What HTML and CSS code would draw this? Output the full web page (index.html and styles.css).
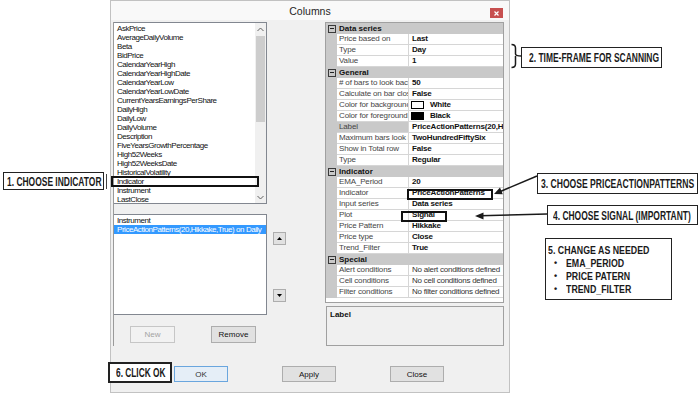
FILE: index.html
```html
<!DOCTYPE html>
<html>
<head>
<meta charset="utf-8">
<title>Columns</title>
<link rel="stylesheet" href="styles.css">
</head>
<body>
<div class="dialog">
  <div class="titlebar">
    <span></span>
    <span class="title">Columns</span>
    <span class="close-btn"><svg width="5" height="5" viewBox="0 0 5 5"><path d="M0.5 0.5L4.5 4.5M4.5 0.5L0.5 4.5" stroke="#fff" stroke-width="1.2"/></svg></span>
  </div>
  <div class="panes">
    <div class="left">
      <div class="list list1">
        <ul class="items">
          <li>AskPrice</li>
          <li>AverageDailyVolume</li>
          <li>Beta</li>
          <li>BidPrice</li>
          <li>CalendarYearHigh</li>
          <li>CalendarYearHighDate</li>
          <li>CalendarYearLow</li>
          <li>CalendarYearLowDate</li>
          <li>CurrentYearsEarningsPerShare</li>
          <li>DailyHigh</li>
          <li>DailyLow</li>
          <li>DailyVolume</li>
          <li>Description</li>
          <li>FiveYearsGrowthPercentage</li>
          <li>High52Weeks</li>
          <li>High52WeeksDate</li>
          <li>HistoricalVolatility</li>
          <li>Indicator</li>
          <li>Instrument</li>
          <li>LastClose</li>
        </ul>
        <div class="vscroll">
          <span class="sb-arrow"><svg width="7" height="5" viewBox="0 0 7 5"><path d="M0.5 4L3.5 1L6.5 4" fill="none" stroke="#606060" stroke-width="1"/></svg></span>
          <span class="sb-thumb"></span>
          <span class="sb-spacer"></span>
          <span class="sb-arrow"><svg width="7" height="5" viewBox="0 0 7 5"><path d="M0.5 1L3.5 4L6.5 1" fill="none" stroke="#606060" stroke-width="1"/></svg></span>
        </div>
      </div>
      <div class="list list2">
        <ul class="items">
          <li>Instrument</li>
          <li class="selected">PriceActionPatterns(20,Hikkake,True) on Daily</li>
        </ul>
      </div>
      <div class="btnrow">
        <button class="btn btn-small disabled">New</button>
        <button class="btn btn-small">Remove</button>
      </div>
    </div>
    <div class="middle">
      <button class="arrowbtn up"><svg width="5" height="3" viewBox="0 0 5 3"><polygon points="0,3 2.5,0 5,3" fill="#000"/></svg></button>
      <button class="arrowbtn down"><svg width="5" height="3" viewBox="0 0 5 3"><polygon points="0,0 2.5,3 5,0" fill="#000"/></svg></button>
    </div>
    <div class="right">
      <div class="propgrid">
        <div class="cat"><span class="gut"><i class="toggle"></i></span><span class="cat-name">Data series</span></div>
        <div class="prop"><span class="gut"></span><span class="pname">Price based on</span><span class="pval">Last</span></div>
        <div class="prop"><span class="gut"></span><span class="pname">Type</span><span class="pval">Day</span></div>
        <div class="prop"><span class="gut"></span><span class="pname">Value</span><span class="pval">1</span></div>
        <div class="cat"><span class="gut"><i class="toggle"></i></span><span class="cat-name">General</span></div>
        <div class="prop"><span class="gut"></span><span class="pname"># of bars to look back</span><span class="pval">50</span></div>
        <div class="prop"><span class="gut"></span><span class="pname">Calculate on bar close</span><span class="pval">False</span></div>
        <div class="prop"><span class="gut"></span><span class="pname">Color for background</span><span class="pval"><i class="swatch swatch-white"></i>White</span></div>
        <div class="prop"><span class="gut"></span><span class="pname">Color for foreground</span><span class="pval"><i class="swatch swatch-black"></i>Black</span></div>
        <div class="prop prop-selected"><span class="gut"></span><span class="pname">Label</span><span class="pval">PriceActionPatterns(20,Hikkake,True)</span></div>
        <div class="prop"><span class="gut"></span><span class="pname">Maximum bars look back</span><span class="pval">TwoHundredFiftySix</span></div>
        <div class="prop"><span class="gut"></span><span class="pname">Show in Total row</span><span class="pval">False</span></div>
        <div class="prop"><span class="gut"></span><span class="pname">Type</span><span class="pval">Regular</span></div>
        <div class="cat"><span class="gut"><i class="toggle"></i></span><span class="cat-name">Indicator</span></div>
        <div class="prop"><span class="gut"></span><span class="pname">EMA_Period</span><span class="pval">20</span></div>
        <div class="prop"><span class="gut"></span><span class="pname">Indicator</span><span class="pval">PriceActionPatterns</span></div>
        <div class="prop"><span class="gut"></span><span class="pname">Input series</span><span class="pval">Data series</span></div>
        <div class="prop"><span class="gut"></span><span class="pname">Plot</span><span class="pval">Signal</span></div>
        <div class="prop"><span class="gut"></span><span class="pname">Price Pattern</span><span class="pval">Hikkake</span></div>
        <div class="prop"><span class="gut"></span><span class="pname">Price type</span><span class="pval">Close</span></div>
        <div class="prop"><span class="gut"></span><span class="pname">Trend_Filter</span><span class="pval">True</span></div>
        <div class="cat"><span class="gut"><i class="toggle"></i></span><span class="cat-name">Special</span></div>
        <div class="prop"><span class="gut"></span><span class="pname">Alert conditions</span><span class="pval pval-plain">No alert conditions defined</span></div>
        <div class="prop"><span class="gut"></span><span class="pname">Cell conditions</span><span class="pval pval-plain">No cell conditions defined</span></div>
        <div class="prop"><span class="gut"></span><span class="pname">Filter conditions</span><span class="pval pval-plain">No filter conditions defined</span></div>
      </div>
      <div class="desc"><b>Label</b></div>
    </div>
  </div>
  <div class="footer">
    <button class="btn btn-wide default">OK</button>
    <button class="btn btn-wide">Apply</button>
    <button class="btn btn-wide">Close</button>
  </div>
</div>

<div class="hl hl-indicator"></div>
<div class="hl hl-pap"></div>
<div class="hl hl-signal"></div>

<div class="note note1"><span class="note-text">1. CHOOSE INDICATOR</span></div>
<div class="note1-tick"></div>
<div class="note note2"><span class="note-text">2. TIME-FRAME FOR SCANNING</span></div>
<div class="note note3"><span class="note-text">3. CHOOSE PRICEACTIONPATTERNS</span></div>
<div class="note note4"><span class="note-text">4. CHOOSE SIGNAL (IMPORTANT)</span></div>
<div class="note note5">
  <div class="n5-line"><span class="note-text">5. CHANGE AS NEEDED</span></div>
  <div class="n5-line n5-bullet"><span class="dot">•</span><span class="note-text">EMA_PERIOD</span></div>
  <div class="n5-line n5-bullet"><span class="dot">•</span><span class="note-text">PRICE PATERN</span></div>
  <div class="n5-line n5-bullet"><span class="dot">•</span><span class="note-text">TREND_FILTER</span></div>
</div>
<div class="note note6"><span class="note-text">6. CLICK OK</span></div>

<svg class="marks" width="699" height="396" viewBox="0 0 699 396">
  <path d="M511.5 44.5Q515.5 44.5 515.5 48V54Q515.5 56 521.5 56M515.5 56V64Q515.5 67.5 511.5 67.5" fill="none" stroke="#1a1a1a" stroke-width="1.5"/>
  <line x1="537" y1="176" x2="498" y2="192.5" stroke="#1a1a1a" stroke-width="1.5"/>
  <polygon points="494,194 502.8,194.2 500,187.6" fill="#1a1a1a"/>
  <line x1="547" y1="214" x2="480" y2="215.8" stroke="#1a1a1a" stroke-width="1.5"/>
  <polygon points="475,216 483.5,212.5 483.5,219.5" fill="#1a1a1a"/>
</svg>
</body>
</html>
```
FILE: styles.css
```css
* { box-sizing: border-box; margin: 0; padding: 0; }
html, body { width: 699px; height: 396px; overflow: hidden; }
body {
  background: #fff;
  position: relative;
  font-family: "Liberation Sans", Arial, sans-serif;
  color: #000;
}
button { font-family: "Liberation Sans", Arial, sans-serif; cursor: default; }

/* dialog */
.dialog {
  margin-left: 110px;
  width: 400px;
  height: 393px;
  background: #f0f0f0;
  display: flex;
  flex-direction: column;
  outline: 1px solid #c2c2c2;
  outline-offset: -1px;
}
.titlebar {
  height: 20px;
  background: #f9f9f9;
  display: grid;
  grid-template-columns: 1fr auto 1fr;
  align-items: center;
}
.title { font-size: 10.5px; color: #262626; padding-top: 2px; }
.close-btn {
  justify-self: end;
  align-self: start;
  margin-top: 8px;
  margin-right: 7px;
  width: 13px;
  height: 10px;
  background: #c75050;
  display: flex;
  align-items: center;
  justify-content: center;
}

.panes {
  display: grid;
  grid-template-columns: 154px 58px 180px;
  margin: 2px 0 0 3px;
}

/* left column */
.left {
  border-left: 1px solid #9a9a9a;
  height: 324px;
  display: flex;
  flex-direction: column;
}
.list {
  background: #fff;
  border: 1px solid #828790;
  border-left: 0;
  display: flex;
  overflow: hidden;
}
.list1 { height: 182px; }
.list2 { height: 101px; margin-top: 10px; }
.items {
  list-style: none;
  flex: 1;
  min-width: 0;
  padding-top: 1px;
  font-size: 8px;
  line-height: 9px;
  letter-spacing: -0.45px;
  color: #111;
}
.items li { padding-left: 3px; white-space: nowrap; overflow: hidden; }
.items li.selected { background: #3399ff; color: #fff; }

.vscroll {
  width: 11px;
  background: #f0f0f0;
  display: flex;
  flex-direction: column;
  align-items: center;
}
.sb-arrow { height: 12px; display: flex; align-items: center; justify-content: center; }
.sb-thumb { width: 9px; height: 86px; background: #cdcdcd; margin-top: 1px; }
.sb-spacer { flex: 1; }

.btnrow { display: flex; gap: 36px; padding-left: 16px; margin-top: 11px; }
.btn {
  font-size: 8px;
  background: #e1e1e1;
  border: 1px solid #adadad;
  color: #111;
}
.btn-small { width: 45px; height: 17px; }
.btn.disabled { color: #a3a3a3; border-color: #c6c6c6; background: #f2f2f2; }

/* middle column */
.middle {
  display: flex;
  flex-direction: column;
  align-items: flex-start;
  padding-left: 6px;
}
.arrowbtn {
  width: 13px;
  height: 13px;
  background: #e1e1e1;
  border: 1px solid #adadad;
  display: flex;
  align-items: center;
  justify-content: center;
}
.arrowbtn.up { margin-top: 210px; }
.arrowbtn.down { margin-top: 44px; }

/* property grid */
.right { display: flex; flex-direction: column; }
.propgrid {
  width: 179px;
  height: 281px;
  border: 1px solid #a0a0a0;
  background: #fff;
  font-size: 8px;
  overflow: hidden;
}
.cat, .prop {
  display: grid;
  grid-template-columns: 11px 72px 1fr;
  height: 11px;
  line-height: 10px;
}
.gut { background: #c9c9c9; }
.cat { background: #c9c9c9; font-weight: bold; color: #111; }
.cat-name { grid-column: 2 / 4; padding-left: 2px; line-height: 11px; }
.toggle {
  display: block;
  width: 8px;
  height: 8px;
  margin: 2px 0 0 2px;
  border: 1px solid #3a3a3a;
  position: relative;
}
.toggle::after {
  content: "";
  position: absolute;
  left: 1px;
  top: 2px;
  width: 4px;
  height: 1px;
  background: #222;
}
.pname {
  color: #454545;
  border-right: 1px solid #d6d6d6;
  border-bottom: 1px solid #d6d6d6;
  padding-left: 2px;
  white-space: nowrap;
  overflow: hidden;
  letter-spacing: -0.15px;
}
.prop-selected .pname { background: #c9c9c9; }
.pval {
  font-weight: bold;
  border-bottom: 1px solid #d6d6d6;
  padding-left: 3px;
  white-space: nowrap;
  overflow: hidden;
  color: #111;
  letter-spacing: -0.2px;
  display: flex;
  align-items: center;
}
.pval-plain { font-weight: normal; color: #333; letter-spacing: -0.25px; }
.swatch {
  display: inline-block;
  flex: none;
  width: 13px;
  height: 8px;
  border: 1px solid #000;
  margin-right: 6px;
  margin-left: -1px;
}
.swatch-white { background: #fff; }
.swatch-black { background: #000; }

.desc {
  margin-top: 3px;
  margin-left: 1px;
  width: 178px;
  height: 40px;
  border: 1px solid #a0a0a0;
  padding: 3px 3px;
  font-size: 8px;
  line-height: 9px;
  color: #111;
}

/* footer */
.footer { display: flex; gap: 54px; padding-left: 64px; margin-top: 20px; }
.btn-wide { width: 54px; height: 16px; }
.btn.default { border-color: #6aa6de; background: #e5eef7; color: #333; }

/* annotation highlights */
.hl { position: absolute; border: 2px solid #111; }
.hl-indicator { left: 111px; top: 176px; width: 148px; height: 11px; }
.hl-pap { left: 407px; top: 189px; width: 86px; height: 11px; }
.hl-signal { left: 401px; top: 211px; width: 46px; height: 11px; }

/* callouts */
.note {
  position: absolute;
  background: #fff;
  border: 1px solid #222;
  display: flex;
  align-items: center;
  font-weight: bold;
  font-size: 13px;
  color: #1a1a1a;
  white-space: nowrap;
}
.note-text { display: inline-block; transform: scaleX(var(--sx, 0.65)); transform-origin: 0 50%; }
.note1 { left: 3px; top: 172px; width: 101px; height: 18px; padding-left: 3px; --sx: 0.65; }
.note1-tick { position: absolute; left: 106px; top: 174px; width: 1px; height: 15px; background: #444; }
.note2 { left: 521px; top: 47px; width: 141px; height: 21px; padding-left: 7px; --sx: 0.65; }
.note3 { left: 537px; top: 173px; width: 161px; height: 21px; padding-left: 3px; --sx: 0.66; }
.note4 { left: 547px; top: 205px; width: 151px; height: 20px; padding-left: 5px; --sx: 0.65; }
.note5 {
  left: 545px;
  top: 238px;
  width: 127px;
  height: 62px;
  display: block;
  padding: 5px 0 0 2px;
  font-size: 11px;
  line-height: 13px;
}
.note5 .note-text { --sx: 0.8; }
.n5-line { display: flex; height: 13px; align-items: center; }
.n5-bullet { padding-left: 6px; }
.dot { width: 12px; font-size: 9px; }
.note6 { left: 108px; top: 362px; width: 64px; height: 21px; border-width: 2px; padding-left: 6px; --sx: 0.64; }

.marks { position: absolute; left: 0; top: 0; pointer-events: none; }
```
